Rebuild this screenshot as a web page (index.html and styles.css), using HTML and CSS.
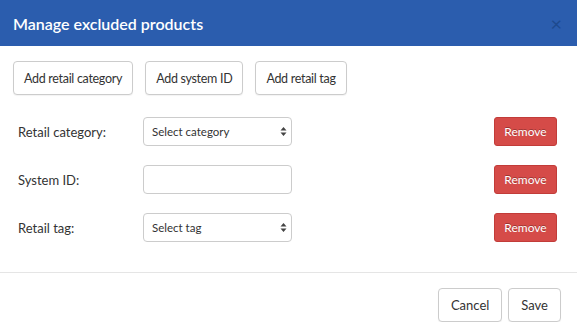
FILE: index.html
```html
<!DOCTYPE html>
<html lang="en">
<head>
  <meta charset="UTF-8">
  <title>Manage excluded products</title>
  <link rel="stylesheet" href="styles.css">
</head>
<body>
  <div class="modal">
    <div class="modal-header">
      <h1 class="modal-title">Manage excluded products</h1>
      <span class="close">&times;</span>
    </div>

    <div class="modal-body">
      <div class="add-buttons">
        <button class="btn btn-add">Add retail category</button>
        <button class="btn btn-add">Add system ID</button>
        <button class="btn btn-add">Add retail tag</button>
      </div>

      <div class="rule-row">
        <label class="rule-label">Retail category:</label>
        <div class="fake-select">
          <span>Select category</span>
          <svg class="arrows" width="7" height="11" viewBox="0 0 7 11"><path d="M3.5 1 L6.5 4.5 H0.5 Z M3.5 10 L6.5 6.5 H0.5 Z" fill="#444"/></svg>
        </div>
        <button class="btn-remove">Remove</button>
      </div>

      <div class="rule-row">
        <label class="rule-label">System ID:</label>
        <input type="text" class="text-input">
        <button class="btn-remove">Remove</button>
      </div>

      <div class="rule-row">
        <label class="rule-label">Retail tag:</label>
        <div class="fake-select">
          <span>Select tag</span>
          <svg class="arrows" width="7" height="11" viewBox="0 0 7 11"><path d="M3.5 1 L6.5 4.5 H0.5 Z M3.5 10 L6.5 6.5 H0.5 Z" fill="#444"/></svg>
        </div>
        <button class="btn-remove">Remove</button>
      </div>
    </div>

    <div class="modal-footer">
      <button class="btn">Cancel</button>
      <button class="btn">Save</button>
    </div>
  </div>
</body>
</html>
```

FILE: styles.css
```css
/* General Styling */
body {
  margin: 0;
  font-family: Lato, "Open Sans", sans-serif;
  background: #fff;
  color: #333;
}

.modal {
  width: 577px;
}

/* Header */
.modal-header {
  display: flex;
  justify-content: space-between;
  align-items: center;
  height: 46px;
  padding: 0 15px 0 13px;
  box-sizing: border-box;
  background: #2b5dae;
}

.modal-title {
  margin: 0;
  font-size: 16px;
  font-weight: 600;
  color: #fff;
}

.close {
  font-size: 20px;
  color: #1d4a8f;
  line-height: 1;
}

/* Body */
.modal-body {
  padding: 15px 13px 11px 13px;
}

.add-buttons {
  display: flex;
  gap: 12px;
  margin-bottom: 22px;
}

.btn {
  height: 34px;
  padding: 0 12px;
  font-family: inherit;
  font-size: 13px;
  color: #333;
  background: #fff;
  border: 1px solid #ccc;
  border-radius: 4px;
  box-shadow: 0 1px 1px rgba(0, 0, 0, 0.05);
}

.btn-add {
  padding: 0 10px;
  font-size: 12.5px;
  letter-spacing: -0.3px;
}

.rule-row {
  display: flex;
  align-items: center;
  height: 29px;
  margin-bottom: 19px;
}

.rule-label {
  width: 125px;
  padding-left: 5px;
  font-size: 13px;
  color: #333;
}

.fake-select,
.text-input {
  width: 149px;
  height: 29px;
  box-sizing: border-box;
  border: 1px solid #ccc;
  border-radius: 4px;
  background: #fff;
}

.fake-select {
  display: flex;
  justify-content: space-between;
  align-items: center;
  padding: 0 4px 0 8px;
  font-size: 11.5px;
  color: #333;
}

.text-input {
  padding: 0 8px;
  outline: none;
}

.btn-remove {
  margin-left: auto;
  margin-right: 7px;
  width: 63px;
  height: 29px;
  font-family: inherit;
  font-size: 12px;
  color: #fff;
  text-shadow: 0 -1px 0 rgba(0, 0, 0, 0.3);
  background: #d54b48;
  border: 1px solid #c23c39;
  border-radius: 3px;
}

/* Footer */
.modal-footer {
  display: flex;
  justify-content: flex-end;
  gap: 6px;
  padding: 15px 16px 0 0;
  border-top: 1px solid #e5e5e5;
}
```
